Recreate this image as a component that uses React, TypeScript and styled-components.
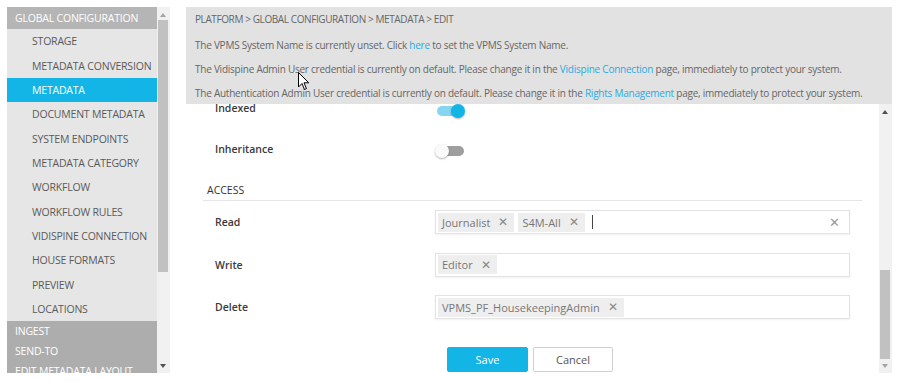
import React from "react";
import styled, { createGlobalStyle } from "styled-components";

const Global = createGlobalStyle`
  html, body { margin: 0; padding: 0; background: #ffffff; }
  body { font-family: "Open Sans", "Noto Sans", sans-serif; font-size: 11px; color: #555; }
  * { box-sizing: border-box; }
`;

const Page = styled.div`
  width: 900px;
  height: 382px;
  display: flex;
  padding: 7px 8px 9px 7px;
  gap: 16px;
  overflow: hidden;
`;

const Sidebar = styled.div`
  width: 163px;
  display: flex;
  flex-shrink: 0;
`;

const NavList = styled.div`
  width: 150px;
  display: flex;
  flex-direction: column;
  background: #e6e6e6;
  overflow: hidden;
`;

const NavHeader = styled.div<{ $h?: number }>`
  height: ${(p) => p.$h ?? 20}px;
  flex-shrink: 0;
  display: flex;
  align-items: center;
  padding-left: 8px;
  background: ${(p) => (p.$h ? "#b5b5b5" : "#adadad")};
  color: #ffffff;
  font-size: 10.5px;
  letter-spacing: -0.2px;
  white-space: nowrap;
`;

const NavItem = styled.div<{ $active?: boolean }>`
  height: 24.35px;
  flex-shrink: 0;
  display: flex;
  align-items: center;
  padding-left: 25px;
  background: ${(p) => (p.$active ? "#12b5e5" : "transparent")};
  color: ${(p) => (p.$active ? "#ffffff" : "#5a5a5a")};
  font-size: 10.5px;
  letter-spacing: -0.2px;
  white-space: nowrap;
`;

const ScrollTrack = styled.div<{ $thumbTop: number; $thumbH: number }>`
  width: 13px;
  flex-shrink: 0;
  background: #f1f1f1;
  position: relative;
  &::after {
    content: "";
    position: absolute;
    left: 1px;
    right: 2px;
    top: ${(p) => p.$thumbTop}px;
    height: ${(p) => p.$thumbH}px;
    background: #c1c1c1;
  }
`;

const Arrow = styled.div<{ $dir: "up" | "down"; $dark?: boolean }>`
  position: absolute;
  left: 3px;
  width: 0;
  height: 0;
  border-left: 3.5px solid transparent;
  border-right: 3.5px solid transparent;
  ${(p) =>
    p.$dir === "up"
      ? `top: 6px; border-bottom: 4px solid ${p.$dark ? "#505050" : "#a3a3a3"};`
      : `bottom: 5px; border-top: 4px solid ${p.$dark ? "#505050" : "#a3a3a3"};`}
`;

const Main = styled.div`
  width: 707px;
  display: flex;
  flex-direction: column;
`;

const Banner = styled.div`
  height: 97px;
  flex-shrink: 0;
  background: #e2e2e2;
  padding: 2px 0 0 9px;
  display: flex;
  flex-direction: column;
  color: #666;
  position: relative;
  z-index: 2;
`;

const BannerLine = styled.div<{ $crumb?: boolean }>`
  height: 24px;
  flex-shrink: 0;
  display: flex;
  align-items: center;
  white-space: nowrap;
  padding-bottom: ${(p) => (p.$crumb ? "4px" : "0")};
  font-size: 10px;
  letter-spacing: ${(p) => (p.$crumb ? "-0.4px" : "-0.24px")};
`;

const Link = styled.span`
  color: #29abe2;
`;

const Body = styled.div`
  flex: 1;
  display: flex;
  min-height: 0;
`;

const Content = styled.div`
  flex: 1;
  overflow: hidden;
  padding: 0 17px;
`;

const Inner = styled.div`
  margin-top: -16.5px;
`;

const Row = styled.div<{ $h: number }>`
  height: ${(p) => p.$h}px;
  display: flex;
  align-items: center;
  padding-right: 12px;
`;

const Label = styled.div`
  width: 232px;
  padding-left: 12px;
  font-weight: 600;
  color: #3a3a3a;
  font-size: 10.5px;
  flex-shrink: 0;
`;

const Section = styled.div`
  height: 31.5px;
  display: flex;
  align-items: center;
  padding: 10px 0 0 4px;
  border-bottom: 1px solid #e5e5e5;
  color: #333;
  font-size: 10.5px;
`;

const Toggle = styled.div<{ $on?: boolean }>`
  width: 30px;
  height: 14px;
  position: relative;
  margin-top: ${(p) => (p.$on ? "5px" : "3px")};
  &::before {
    content: "";
    position: absolute;
    left: 2px;
    right: 1px;
    top: 2px;
    height: 10px;
    border-radius: 5px;
    background: ${(p) => (p.$on ? "#86d6f1" : "#9e9e9e")};
  }
  &::after {
    content: "";
    position: absolute;
    top: 0;
    ${(p) => (p.$on ? "right: 0;" : "left: 0;")}
    width: 14px;
    height: 14px;
    border-radius: 50%;
    background: ${(p) => (p.$on ? "#12b5e5" : "#fafafa")};
    box-shadow: 0 1px 2px rgba(0, 0, 0, 0.3);
  }
`;

const TagInput = styled.div`
  flex: 1;
  height: 24px;
  border: 1px solid #e3e3e3;
  box-shadow: 0 1px 2px rgba(0, 0, 0, 0.06);
  display: flex;
  align-items: center;
  padding: 0 3px 0 2px;
  gap: 4px;
  background: #fff;
`;

const Tag = styled.div`
  height: 19px;
  display: flex;
  align-items: center;
  gap: 8px;
  padding: 0 6px 0 4px;
  background: #eeeeee;
  color: #777;
  font-size: 11px;
  white-space: nowrap;
`;

const X = styled.span`
  color: #888;
  font-size: 12px;
  line-height: 1;
`;

const Caret = styled.div`
  width: 1px;
  height: 14px;
  background: #444;
  margin-left: 3px;
`;

const Spacer = styled.div`
  flex: 1;
`;

const ClearX = styled.span`
  color: #9a9a9a;
  font-size: 13px;
  margin-right: 6px;
`;

const Buttons = styled.div`
  display: flex;
  gap: 5px;
  padding: 18px 0 0 244px;
`;

const Button = styled.button<{ $primary?: boolean }>`
  width: ${(p) => (p.$primary ? 81 : 80)}px;
  height: 25px;
  border-radius: 2px;
  font-family: "Open Sans", "Noto Sans", sans-serif;
  font-size: 11px;
  border: 1px solid ${(p) => (p.$primary ? "#12b5e5" : "#cfcfcf")};
  background: ${(p) => (p.$primary ? "#12b5e5" : "#ffffff")};
  color: ${(p) => (p.$primary ? "#ffffff" : "#555")};
  padding: 0;
`;

const Cursor = styled.svg`
  position: absolute;
  left: 112px;
  top: 65px;
`;

const navItems = [
  "STORAGE",
  "METADATA CONVERSION",
  "METADATA",
  "DOCUMENT METADATA",
  "SYSTEM ENDPOINTS",
  "METADATA CATEGORY",
  "WORKFLOW",
  "WORKFLOW RULES",
  "VIDISPINE CONNECTION",
  "HOUSE FORMATS",
  "PREVIEW",
  "LOCATIONS",
];

const access: { label: string; tags: string[]; caret?: boolean }[] = [
  { label: "Read", tags: ["Journalist", "S4M-All"], caret: true },
  { label: "Write", tags: ["Editor"] },
  { label: "Delete", tags: ["VPMS_PF_HousekeepingAdmin"] },
];

export default function App() {
  return (
    <>
      <Global />
      <Page>
        <Sidebar>
          <NavList>
            <NavHeader $h={22}>GLOBAL CONFIGURATION</NavHeader>
            {navItems.map((n) => (
              <NavItem key={n} $active={n === "METADATA"}>
                {n}
              </NavItem>
            ))}
            <NavHeader>INGEST</NavHeader>
            <NavHeader>SEND-TO</NavHeader>
            <NavHeader>EDIT METADATA LAYOUT</NavHeader>
          </NavList>
          <ScrollTrack $thumbTop={13} $thumbH={252}>
            <Arrow $dir="up" />
            <Arrow $dir="down" $dark />
          </ScrollTrack>
        </Sidebar>
        <Main>
          <Banner>
            <BannerLine $crumb>PLATFORM &gt; GLOBAL CONFIGURATION &gt; METADATA &gt; EDIT</BannerLine>
            <BannerLine>
              The VPMS System Name is currently unset. Click&nbsp;<Link>here</Link>&nbsp;to set the VPMS System Name.
            </BannerLine>
            <BannerLine>
              The Vidispine Admin User credential is currently on default. Please change it in the&nbsp;
              <Link>Vidispine Connection</Link>&nbsp;page, immediately to protect your system.
            </BannerLine>
            <BannerLine>
              The Authentication Admin User credential is currently on default. Please change it in the&nbsp;
              <Link>Rights Management</Link>&nbsp;page, immediately to protect your system.
            </BannerLine>
            <Cursor width="12" height="19" viewBox="0 0 12 19">
              <path d="M0.5 0.5 L0.5 15 L4 11.5 L6.5 17.5 L8.5 16.6 L6 10.8 L10.8 10.8 Z" fill="#ffffff" stroke="#000" strokeWidth="1" />
            </Cursor>
          </Banner>
          <Body>
            <Content>
              <Inner>
                <Row $h={41}>
                  <Label>Indexed</Label>
                  <Toggle $on />
                </Row>
                <Row $h={41}>
                  <Label>Inheritance</Label>
                  <Toggle />
                </Row>
                <Section>ACCESS</Section>
                {access.map((a) => (
                  <Row key={a.label} $h={42.5}>
                    <Label>{a.label}</Label>
                    <TagInput>
                      {a.tags.map((t) => (
                        <Tag key={t}>
                          {t}
                          <X>✕</X>
                        </Tag>
                      ))}
                      {a.caret && (
                        <>
                          <Caret />
                          <Spacer />
                          <ClearX>✕</ClearX>
                        </>
                      )}
                    </TagInput>
                  </Row>
                ))}
                <Buttons>
                  <Button $primary>Save</Button>
                  <Button>Cancel</Button>
                </Buttons>
              </Inner>
            </Content>
            <ScrollTrack $thumbTop={166} $thumbH={89}>
              <Arrow $dir="up" $dark />
              <Arrow $dir="down" />
            </ScrollTrack>
          </Body>
        </Main>
      </Page>
    </>
  );
}
